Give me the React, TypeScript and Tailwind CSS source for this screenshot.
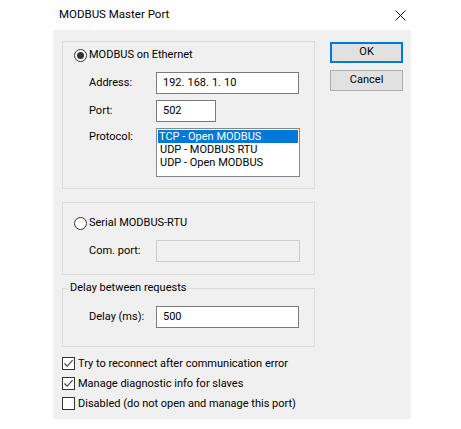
import React from 'react';

const font = { fontFamily: 'Roboto, "Noto Sans", sans-serif' };

function Radio({ checked }: { checked: boolean }) {
  return (
    <span className="flex h-[13px] w-[13px] shrink-0 items-center justify-center rounded-full border border-[#333333] bg-white">
      {checked ? <span className="h-[7px] w-[7px] rounded-full bg-[#333333]" /> : null}
    </span>
  );
}

function Check({ checked, label }: { checked: boolean; label: string }) {
  return (
    <div className="flex h-[13px] items-center gap-[3px] whitespace-nowrap">
      <span className="flex h-[13px] w-[13px] shrink-0 items-center justify-center border border-[#333333] bg-white">
        {checked ? (
          <svg width="11" height="11" viewBox="0 0 11 11">
            <path d="M1.5 5.5 L4.2 8.3 L9.6 2.2" fill="none" stroke="#333333" strokeWidth="1.1" />
          </svg>
        ) : null}
      </span>
      <span className="leading-[13px]">{label}</span>
    </div>
  );
}

function Field({ label, children, top = false }: { label: string; children: React.ReactNode; top?: boolean }) {
  return (
    <div className={`flex ${top ? 'items-start' : 'items-center'}`}>
      <span className={`w-[67px] shrink-0 whitespace-nowrap ${top ? 'pt-[1px]' : ''}`}>{label}</span>
      {children}
    </div>
  );
}

export default function App() {
  return (
    <div className="h-[429px] w-[461px] bg-white text-[11px] text-[#000000]" style={font}>
      <div className="flex h-[30px] items-center justify-between pl-[59px] pr-[55px]">
        <span className="text-[11.5px]">MODBUS Master Port</span>
        <svg width="11" height="11" viewBox="0 0 11 11">
          <path d="M0.5 0.5 L10.5 10.5 M10.5 0.5 L0.5 10.5" stroke="#111111" strokeWidth="1" />
        </svg>
      </div>
      <div className="ml-[53px] flex h-[389px] w-[358px] gap-[15px] bg-[#f0f0f0] pl-[9px] pr-[8px] pt-[11px]">
        <div className="flex w-[254px] flex-col">
          {/* ethernet group */}
          <div className="flex h-[148px] flex-col border border-[#dcdcdc] px-[11px] pt-[7px]">
            <div className="flex h-[13px] items-center gap-[2px] whitespace-nowrap">
              <Radio checked />
              <span>MODBUS on Ethernet</span>
            </div>
            <div className="ml-[15px] mt-[10px] flex flex-col gap-[6px]">
              <Field label="Address:">
                <div className="flex h-[22px] w-[143px] items-center border border-[#7a7a7a] bg-white pl-[6px]">
                  <span>192</span>
                  <span className="mr-[3px]">.</span>
                  <span>168</span>
                  <span className="mr-[3px]">.</span>
                  <span>1</span>
                  <span className="mr-[3px]">.</span>
                  <span>10</span>
                </div>
              </Field>
              <Field label="Port:">
                <div className="flex h-[22px] w-[60px] items-center border border-[#7a7a7a] bg-white pl-[6px]">502</div>
              </Field>
              <Field label="Protocol:" top>
                <div className="flex h-[49px] w-[144px] flex-col border border-[#828790] bg-white p-[1px] whitespace-nowrap">
                  <div className="flex h-[13px] items-center bg-[#0078d7] pl-[1px] text-white">
                    <span className="leading-[13px]">TCP - Open MODBUS</span>
                  </div>
                  <div className="flex h-[13px] items-center pl-[2px]">
                    <span className="leading-[13px]">UDP - MODBUS RTU</span>
                  </div>
                  <div className="flex h-[13px] items-center pl-[2px]">
                    <span className="leading-[13px]">UDP - Open MODBUS</span>
                  </div>
                </div>
              </Field>
            </div>
          </div>

          {/* serial group */}
          <div className="mt-[13px] flex h-[73px] flex-col border border-[#dcdcdc] px-[11px] pt-[14px]">
            <div className="flex h-[13px] items-center gap-[2px] whitespace-nowrap">
              <Radio checked={false} />
              <span>Serial MODBUS-RTU</span>
            </div>
            <div className="ml-[15px] mt-[10px]">
              <Field label="Com. port:">
                <div className="h-[22px] w-[144px] border border-[#cccccc] bg-[#f0f0f0]" />
              </Field>
            </div>
          </div>

          {/* delay group */}
          <div className="relative mt-[13px] flex h-[59px] flex-col border border-[#dcdcdc] pl-[26px] pt-[17px]">
            <span className="absolute left-[5px] top-[-9px] whitespace-nowrap bg-[#f0f0f0] px-[2px] leading-[16px]">Delay between requests</span>
            <Field label="Delay (ms):">
              <div className="flex h-[22px] w-[143px] items-center border border-[#7a7a7a] bg-white pl-[6px]">500</div>
            </Field>
          </div>

          <div className="mt-[10px] flex flex-col gap-[7px]">
            <Check checked label="Try to reconnect after communication error" />
            <Check checked label="Manage diagnostic info for slaves" />
            <Check checked={false} label="Disabled (do not open and manage this port)" />
          </div>
        </div>

        <div className="flex w-[73px] flex-col gap-[7px] pt-[1px]">
          <button className="flex h-[21px] items-center justify-center border-2 border-[#0078d7] bg-[#e1e1e1]">OK</button>
          <button className="flex h-[21px] items-center justify-center border border-[#adadad] bg-[#e1e1e1]">Cancel</button>
        </div>
      </div>
    </div>
  );
}
